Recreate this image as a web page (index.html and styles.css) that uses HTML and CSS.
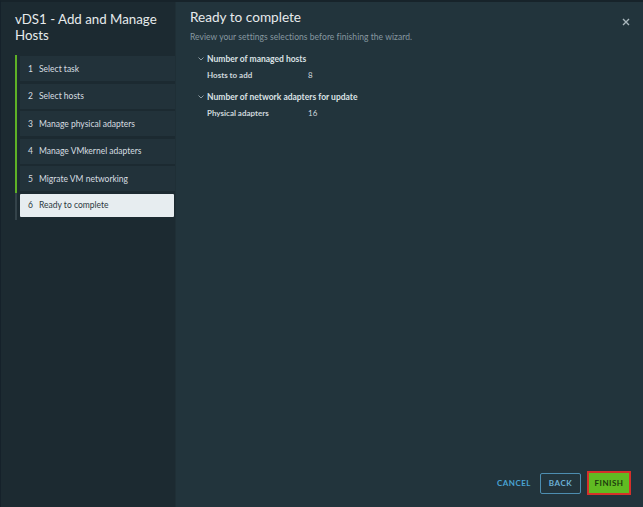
FILE: index.html
```html
<!DOCTYPE html>
<html>
<head>
<meta charset="utf-8">
<link rel="stylesheet" href="styles.css">
</head>
<body>
<div class="modal">
  <aside class="sidebar">
    <h1 class="wizard-title">vDS1 - Add and Manage Hosts</h1>
    <ol class="steps">
      <li class="step done"><span class="step-inner"><span class="num">1</span>Select task</span></li>
      <li class="step done"><span class="step-inner"><span class="num">2</span>Select hosts</span></li>
      <li class="step done"><span class="step-inner"><span class="num">3</span>Manage physical adapters</span></li>
      <li class="step done"><span class="step-inner"><span class="num">4</span>Manage VMkernel adapters</span></li>
      <li class="step done"><span class="step-inner"><span class="num">5</span>Migrate VM networking</span></li>
      <li class="step current"><span class="step-inner"><span class="num">6</span>Ready to complete</span></li>
    </ol>
  </aside>
  <main class="main">
    <header class="main-head">
      <div>
        <h2 class="page-title">Ready to complete</h2>
        <p class="subtitle">Review your settings selections before finishing the wizard.</p>
      </div>
      <button class="close" aria-label="Close">
        <svg width="8" height="8" viewBox="0 0 8 8"><path d="M1 1L7 7M7 1L1 7" stroke="#a9b6bc" stroke-width="1.4" fill="none"/></svg>
      </button>
    </header>
    <section class="summary">
      <div class="group">
        <div class="group-title"><svg class="chev" width="6" height="4" viewBox="0 0 6 4"><path d="M0.5 0.5L3 3L5.5 0.5" stroke="#8c9ba2" stroke-width="1" fill="none"/></svg>Number of managed hosts</div>
        <div class="row"><span class="label">Hosts to add</span><span class="value">8</span></div>
      </div>
      <div class="group">
        <div class="group-title"><svg class="chev" width="6" height="4" viewBox="0 0 6 4"><path d="M0.5 0.5L3 3L5.5 0.5" stroke="#8c9ba2" stroke-width="1" fill="none"/></svg>Number of network adapters for update</div>
        <div class="row"><span class="label">Physical adapters</span><span class="value">16</span></div>
      </div>
    </section>
    <footer class="actions">
      <button class="btn btn-link">CANCEL</button>
      <button class="btn btn-outline">BACK</button>
      <button class="btn btn-primary">FINISH</button>
    </footer>
  </main>
</div>
</body>
</html>
```
FILE: styles.css
```css
html, body {
  margin: 0;
  padding: 0;
  background: #1b2930;
}
body {
  font-family: Lato, "Noto Sans", sans-serif;
  width: 643px;
  height: 507px;
  overflow: hidden;
}
.modal {
  display: flex;
  height: 507px;
  box-sizing: border-box;
  border-top: 2px solid #17232a;
  border-left: 1px solid #15212a;
}
.sidebar {
  width: 175px;
  background: #1c2a31;
  border-right: 1px solid #1f2f36;
  box-sizing: border-box;
  padding: 9px 0 0 14px;
}
.wizard-title {
  margin: 0 0 12px 0;
  font-weight: 400;
  font-size: 13.3px;
  line-height: 16px;
  color: #e6eaec;
}
.steps {
  list-style: none;
  margin: 0;
  padding: 0;
  display: flex;
  flex-direction: column;
}
.step {
  border-left: 2px solid #5eb026;
  padding: 1px 0 1.5px 3px;
}
.step.current {
  border-left-color: #34434a;
  padding-bottom: 3px;
}
.step-inner {
  display: flex;
  align-items: center;
  height: 25px;
  background: #22323a;
  padding-left: 8px;
  font-size: 8.5px;
  color: #d7dee1;
}
.step.current .step-inner {
  height: 23px;
  background: #e7edf0;
  color: #2b383e;
  margin-right: 1px;
  border-radius: 1px;
}
.num {
  width: 11px;
}
.main {
  flex: 1;
  background: #22343c;
  display: flex;
  flex-direction: column;
  padding: 6px 12px 12px 14px;
}
.main-head {
  display: flex;
  justify-content: space-between;
  align-items: flex-start;
}
.page-title {
  margin: 0;
  font-weight: 400;
  font-size: 13.6px;
  line-height: 19px;
  color: #e6eaec;
}
.subtitle {
  margin: 5px 0 0 0;
  font-size: 8.5px;
  color: #8798a0;
  letter-spacing: 0.05px;
}
.close {
  background: none;
  border: 0;
  padding: 0;
  margin: 9px 0 0 0;
  width: 10px;
  height: 10px;
  display: flex;
  align-items: center;
  justify-content: center;
}
.summary {
  flex: 1;
  padding: 11px 0 0 17px;
}
.group {
  margin-bottom: 9px;
}
.group-title {
  display: flex;
  align-items: center;
  font-size: 8.5px;
  font-weight: 700;
  color: #dbe2e5;
  height: 12px;
  margin-left: -9px;
}
.chev {
  width: 6px;
  margin: 0 3px 0 0;
}
.row {
  display: flex;
  align-items: center;
  height: 14px;
  margin-top: 3px;
  font-size: 8px;
  font-weight: 700;
  color: #cfd8dc;
}
.label {
  width: 101px;
}
.value {
  font-weight: 400;
}
.actions {
  display: flex;
  justify-content: flex-end;
  align-items: center;
  gap: 6px;
}
.btn {
  font-family: Lato, "Noto Sans", sans-serif;
  font-size: 8px;
  font-weight: 700;
  letter-spacing: 0.5px;
  height: 21px;
  box-sizing: border-box;
  border-radius: 2px;
  cursor: pointer;
}
.btn-link {
  background: none;
  border: 0;
  color: #49a3d3;
  padding: 0 3px 0 10px;
}
.btn-outline {
  background: transparent;
  border: 1px solid #4d8db0;
  color: #6cb1d6;
  width: 41px;
  padding: 0;
}
.btn-primary {
  background: #60bb22;
  border: 2px solid #d5312a;
  color: #1c3a0e;
  width: 44px;
  height: 24px;
  padding: 0;
  border-radius: 0;
}
```
